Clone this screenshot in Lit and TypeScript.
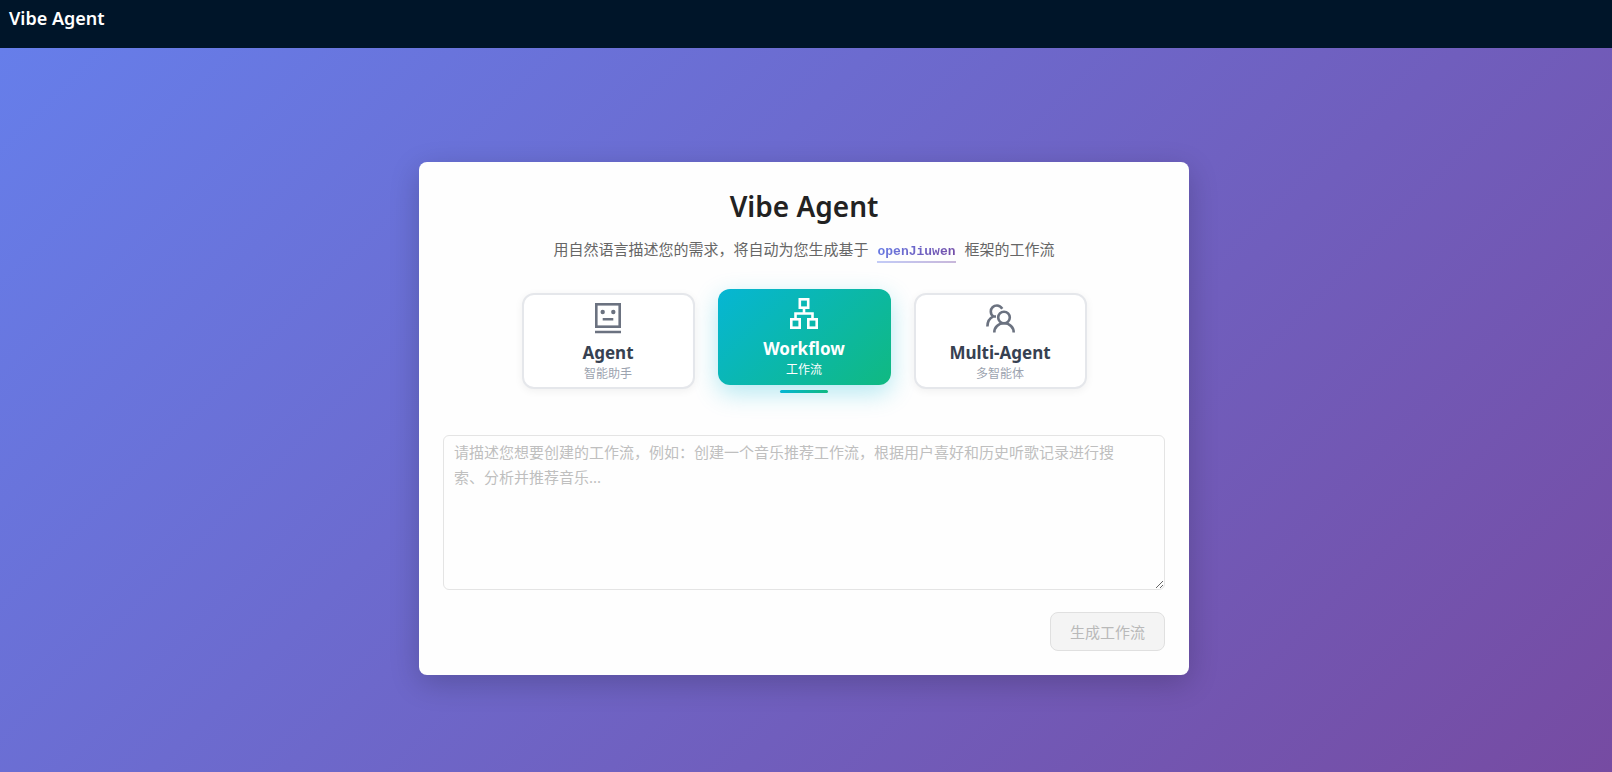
import { LitElement, html, css, svg } from "lit";
import { customElement, state } from "lit/decorators.js";

interface Mode {
  id: string;
  name: string;
  label: string;
  icon: unknown;
}

const agentIcon = svg`
  <rect x="4.3" y="3.3" width="23.4" height="22.4" />
  <path d="M3 31h26M10.700 18.200h10.600" />
  <circle cx="10.7" cy="11" r="2.2" fill="currentColor" stroke="none" />
  <circle cx="21.3" cy="11" r="2.2" fill="currentColor" stroke="none" />
`;
const workflowIcon = svg`
  <rect x="11.8" y="2.3" width="8.4" height="8.4" />
  <rect x="3.300" y="22.300" width="8.400" height="8.400" />
  <rect x="20.300" y="22.300" width="8.400" height="8.400" />
  <path d="M16 10.700v5.800M7.500 22.300v-5.800h17v5.800" />
`;
const multiIcon = svg`
  <circle cx="20" cy="16.500" r="5.800" />
  <path d="M10.300 31.500c0-5 4-9.200 9.700-9.200s9.700 4.200 9.700 9.200" />
  <path d="M18.300 7.700c-1.300-2-3-3.200-5.300-3.200c-3.600 0-6.200 2.700-6.200 6c0 2.100 1 3.900 2.500 4.900c-3.500 1.700-5.900 5.200-5.900 10.100M9 15.500h3" />
`;

const modes: Mode[] = [
  { id: "agent", name: "Agent", label: "智能助手", icon: agentIcon },
  { id: "workflow", name: "Workflow", label: "工作流", icon: workflowIcon },
  { id: "multi", name: "Multi-Agent", label: "多智能体", icon: multiIcon },
];

@customElement("app-root")
export class AppRoot extends LitElement {
  static styles = css`
    :host {
      display: flex;
      flex-direction: column;
      min-height: 100vh;
      font-family: "Noto Sans", "Noto Sans CJK SC", sans-serif;
      font-size: 15px;
      color: #222;
    }
    * {
      box-sizing: border-box;
    }
    .bar {
      height: 48px;
      padding: 6px 9px;
      background: #001529;
      color: #fff;
      font-size: 18px;
      font-weight: 600;
      line-height: 24px;
    }
    .stage {
      flex: 1;
      display: flex;
      align-items: center;
      justify-content: center;
      padding: 40px 28px 24px 24px;
      background: linear-gradient(135deg, #667eea 0%, #764ba2 100%);
    }
    .card {
      width: 100%;
      max-width: 770px;
      padding: 23px 24px 24px;
      border-radius: 8px;
      background: #fefefe;
      box-shadow: 0 8px 30px rgba(0, 0, 0, 0.2);
    }
    h1 {
      margin: 0;
      text-align: center;
      font-size: 28px;
      font-weight: 600;
      line-height: 42px;
    }
    .intro {
      margin: 10px 0 0;
      text-align: center;
      color: #666;
      line-height: 24px;
    }
    .intro a {
      display: inline-block;
      margin: 0 5px;
      font-family: "Liberation Mono", monospace;
      font-size: 13px;
      font-weight: 700;
      line-height: 18px;
      text-decoration: none;
      color: transparent;
      background: linear-gradient(135deg, #667eea, #764ba2);
      -webkit-background-clip: text;
      background-clip: text;
      border-bottom: 2px solid;
      border-image: linear-gradient(90deg, #c2cbf7, #c8b7da) 1;
    }
    .modes {
      display: flex;
      justify-content: center;
      gap: 23px;
      margin: 30px 0 0;
    }
    .mode {
      position: relative;
      width: 173px;
      height: 96px;
      padding: 6px 0 4px;
      display: flex;
      flex-direction: column;
      align-items: center;
      border: 2px solid #e5e7eb;
      border-radius: 12px;
      background: #fff;
      box-shadow: 0 2px 8px rgba(0, 0, 0, 0.06);
      color: #6b7280;
      font-family: inherit;
    }
    .mode svg {
      width: 32px;
      height: 34px;
      fill: none;
      stroke: currentColor;
      stroke-width: 2.6;
    }
    .name {
      margin-top: 6px;
      font-size: 17px;
      font-weight: 700;
      line-height: 24px;
      color: #374151;
    }
    .label {
      font-size: 12px;
      line-height: 18px;
      color: #9ca3af;
    }
    .mode.on {
      transform: translateY(-4px);
      border-color: transparent;
      background: linear-gradient(135deg, #06b6d4, #10b981) border-box;
      box-shadow: 0 8px 24px rgba(6, 182, 212, 0.3);
      color: #fff;
    }
    .mode.on .name,
    .mode.on .label {
      color: #fff;
    }
    .mode.on::after {
      content: "";
      position: absolute;
      left: 50%;
      bottom: -10px;
      width: 48px;
      height: 3px;
      margin-left: -24px;
      border-radius: 2px;
      background: linear-gradient(90deg, #06b6d4, #10b981);
    }
    textarea {
      display: block;
      width: 100%;
      height: 155px;
      margin: 46px 0 0;
      padding: 4px 24px 4px 10px;
      border: 1px solid #e4e4e4;
      border-radius: 6px;
      background: #fefefe;
      font: inherit;
      line-height: 25px;
      resize: vertical;
    }
    textarea::placeholder {
      color: #bfbfbf;
    }
    .actions {
      display: flex;
      justify-content: flex-end;
      margin-top: 22px;
    }
    .submit {
      height: 39px;
      padding: 0 19px;
      border: 1px solid #e0e0e0;
      border-radius: 8px;
      background: #f4f4f4;
      color: #b9b9b9;
      font: inherit;
    }
  `;

  @state() private current = "workflow";

  render() {
    return html`
      <header class="bar">Vibe Agent</header>
      <main class="stage">
        <section class="card">
          <h1>Vibe Agent</h1>
          <p class="intro">
            用自然语言描述您的需求，将自动为您生成基于
            <a href="#">openJiuwen</a>
            框架的工作流
          </p>
          <div class="modes">
            ${modes.map(
              (m) => html`
                <button
                  type="button"
                  class="mode ${m.id === this.current ? "on" : ""}"
                  aria-pressed=${m.id === this.current}
                  @click=${() => (this.current = m.id)}
                >
                  <svg viewBox="0 0 32 34" aria-hidden="true">${m.icon}</svg>
                  <span class="name">${m.name}</span>
                  <span class="label">${m.label}</span>
                </button>
              `
            )}
          </div>
          <textarea
            aria-label="工作流描述"
            placeholder="请描述您想要创建的工作流，例如：创建一个音乐推荐工作流，根据用户喜好和历史听歌记录进行搜索、分析并推荐音乐..."
          ></textarea>
          <div class="actions">
            <button type="button" class="submit" disabled>生成工作流</button>
          </div>
        </section>
      </main>
    `;
  }
}
